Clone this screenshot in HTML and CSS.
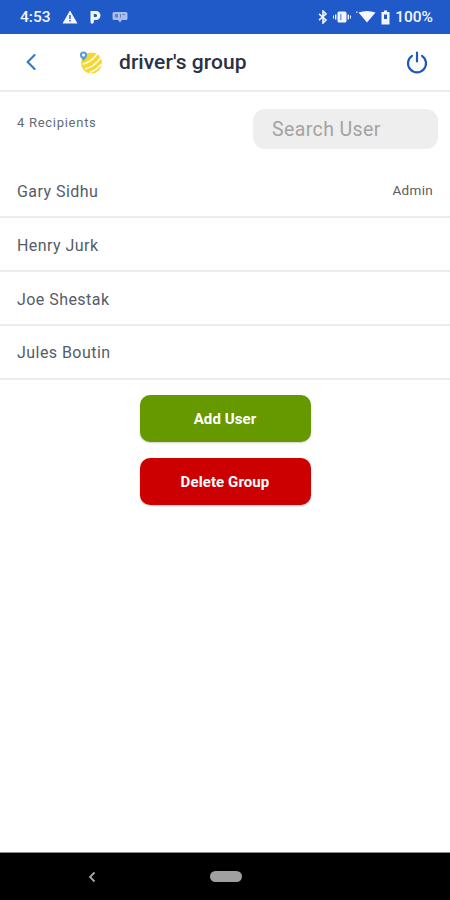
FILE: index.html
```html
<!DOCTYPE html>
<html lang="en">
<head>
<meta charset="utf-8">
<title>driver's group</title>
<link rel="stylesheet" href="styles.css">
</head>
<body>
<div class="screen">
  <div class="statusbar">
    <div class="status-left">
      <span class="time">4:53</span>
      <svg class="ic-warn" viewBox="0 0 16 14" width="16" height="14"><path fill="#f4f6fc" fill-rule="evenodd" d="M8 0.5 L15.5 13.5 H0.5 Z M7.3 5 V9 H8.7 V5 Z M7.3 10 V11.5 H8.7 V10 Z"/></svg>
      <svg class="ic-p" viewBox="0 0 12 14" width="12" height="14"><path fill="#f4f6fc" fill-rule="evenodd" d="M1.5 1 H7 A4.5 4.5 0 0 1 7 10 H4.8 V12 A1.6 1.6 0 0 1 1.5 12 Z M4.8 4 V7 H6.6 A1.5 1.5 0 0 0 6.6 4 Z"/></svg>
      <svg class="ic-msg" viewBox="0 0 16 12" width="16" height="12"><path fill="#a9bde8" d="M2 1 H14 A1.5 1.5 0 0 1 15.5 2.5 V7.5 A1.5 1.5 0 0 1 14 9 H10 L8 11.5 L6 9 H2 A1.5 1.5 0 0 1 0.5 7.5 V2.5 A1.5 1.5 0 0 1 2 1 Z"/><path fill="#5d84d6" d="M3 3 H6 V6.5 H3 Z M8 3 H9 V6.5 H8 Z M10.5 3 H13 V4 H10.5 Z"/></svg>
    </div>
    <div class="status-right">
      <svg viewBox="0 0 10 14" width="10" height="14"><path fill="none" stroke="#f4f6fc" stroke-width="1.6" d="M1 3.8 L8 10 L5 13 V1 L8 4 L1 10.2"/></svg>
      <svg viewBox="0 0 18 12" width="18" height="12"><path fill="#f4f6fc" d="M6 0.5 H12 A1.5 1.5 0 0 1 13.5 2 V10 A1.5 1.5 0 0 1 12 11.5 H6 A1.5 1.5 0 0 1 4.5 10 V2 A1.5 1.5 0 0 1 6 0.5 Z M2 3.5 H3.4 V8.5 H2 Z M14.6 3.5 H16 V8.5 H14.6 Z M0 4.5 H1 V7.5 H0 Z M17 4.5 H18 V7.5 H17 Z"/><path fill="#7f9fe0" d="M7 3 H8.5 V9 H7 Z"/></svg>
      <svg viewBox="0 0 20 12" width="20" height="12"><path fill="#f4f6fc" d="M2.5 1.5 Q11 -1.5 19.5 1.5 L11 11.5 Z"/><path fill="#c4d2f0" d="M0 0.5 H1.5 V2 H0 Z"/></svg>
      <svg viewBox="0 0 9 15" width="9" height="15"><path fill="#f4f6fc" fill-rule="evenodd" d="M3 0.5 H6 V2 H8.5 V14.5 H0.5 V2 H3 Z M3 4.5 V9 H6 V4.5 Z"/></svg>
      <span class="pct">100%</span>
    </div>
  </div>
  <header class="topbar">
    <svg class="ic-back" viewBox="0 0 12 18" width="12" height="18"><path fill="none" stroke="#2f78cf" stroke-width="2.1" stroke-linecap="round" stroke-linejoin="round" d="M9.6 2 L2.6 9 L9.6 16"/></svg>
    <svg class="logo" viewBox="0 0 26 26" width="26" height="26">
      <circle cx="14.5" cy="14" r="10.5" fill="#f3d835"/>
      <path fill="none" stroke="#fdfbe6" stroke-width="1.5" d="M8 20 Q17 18 23.5 9 M5.5 15 Q13 14 20 5.2 M12.5 23.5 Q20 21 24.6 15"/>
      <circle cx="6.5" cy="6" r="3.6" fill="#5a9fd0"/>
      <circle cx="6.5" cy="6" r="1.5" fill="#fff"/>
      <path fill="#5a9fd0" d="M3.6 8 L6.8 12 L9.4 8 Z"/>
    </svg>
    <h1 class="title">driver's group</h1>
    <svg class="ic-power" viewBox="0 0 24 24" width="24" height="24"><path fill="none" stroke="#2157bd" stroke-width="2.2" stroke-linecap="round" d="M7 5.8 A9 9 0 1 0 17 5.8 M12 2.5 V11.5"/></svg>
  </header>
  <main class="content">
    <div class="summary">
      <span class="count">4 Recipients</span>
      <div class="search">Search User</div>
    </div>
    <ul class="list">
      <li class="row first"><span class="name">Gary Sidhu</span><span class="role">Admin</span></li>
      <li class="row"><span class="name">Henry Jurk</span></li>
      <li class="row"><span class="name">Joe Shestak</span></li>
      <li class="row last"><span class="name">Jules Boutin</span></li>
    </ul>
    <div class="actions">
      <button class="btn btn-add">Add User</button>
      <button class="btn btn-del">Delete Group</button>
    </div>
  </main>
  <nav class="navbar">
    <svg class="nav-back" viewBox="0 0 10 14" width="10" height="14"><path fill="none" stroke="#a8a8a8" stroke-width="1.8" d="M7.5 2.5 L3 7 L7.5 11.5"/></svg>
    <span class="nav-home"></span>
  </nav>
</div>
</body>
</html>
```

FILE: styles.css
```css
* { box-sizing: border-box; }
html, body { margin: 0; padding: 0; }
body { font-family: Roboto, "Liberation Sans", sans-serif; background: #fff; }
.screen { width: 450px; height: 900px; display: flex; flex-direction: column; overflow: hidden; }

.statusbar { height: 34px; flex: none; background: #2059c8; color: #f4f6fc; display: flex; justify-content: space-between; align-items: center; padding: 0 17px 0 20px; font-size: 15.5px; font-weight: 500; }
.status-left, .status-right { display: flex; align-items: center; }
.status-left { gap: 11px; }
.status-left .ic-warn { margin-left: 0; }
.status-left .ic-msg { margin-left: 0; }
.status-right { gap: 5px; }
.pct { margin-left: 0; }

.topbar { height: 58px; flex: none; display: flex; align-items: center; padding: 0 21px 0 25px; border-bottom: 2px solid #ececec; }
.logo { margin-left: 40px; }
.title { margin: 0 0 0 16px; font-size: 21px; font-weight: 500; color: #2a3148; flex: 1; letter-spacing: 0.05px; }

.content { flex: 1; display: flex; flex-direction: column; }
.summary { display: flex; justify-content: space-between; align-items: flex-start; padding: 17px 12px 0 17px; height: 73px; }
.count { font-size: 13px; color: #646b77; margin-top: 6px; letter-spacing: 0.72px; }
.search { width: 185px; height: 40px; background: #eeeeee; border-radius: 12px; padding-left: 19px; line-height: 42px; font-size: 19.5px; color: #a3a3a3; letter-spacing: 0.4px; }

.list { list-style: none; margin: 0; padding: 0; }
.row { height: 54px; display: flex; justify-content: space-between; align-items: center; padding: 2px 17px 0; border-bottom: 2px solid #ececec; }
.row.first { height: 53px; }
.row.last { padding-top: 0; }
.name { font-size: 16px; color: #555c69; letter-spacing: 0.45px; }
.role { font-size: 13.5px; color: #5c5c5c; letter-spacing: 0.3px; margin-bottom: 4px; }

.actions { display: flex; flex-direction: column; align-items: center; gap: 16px; padding-top: 15px; }
.btn { width: 171px; height: 47px; border: none; border-radius: 10px; color: #fff; font-family: inherit; font-size: 15px; font-weight: 700; letter-spacing: 0.1px; box-shadow: 0 1px 2px rgba(0,0,0,0.2); }
.btn-add { background: #669900; }
.btn-del { background: #cc0000; }

.navbar { height: 48px; flex: none; background: #000; border-top: 1px solid #8c8c8c; display: flex; align-items: center; }
.nav-back { margin-left: 87px; }
.nav-home { width: 32px; height: 11px; border-radius: 6px; background: #a0a0a0; margin-left: 113px; }
```
